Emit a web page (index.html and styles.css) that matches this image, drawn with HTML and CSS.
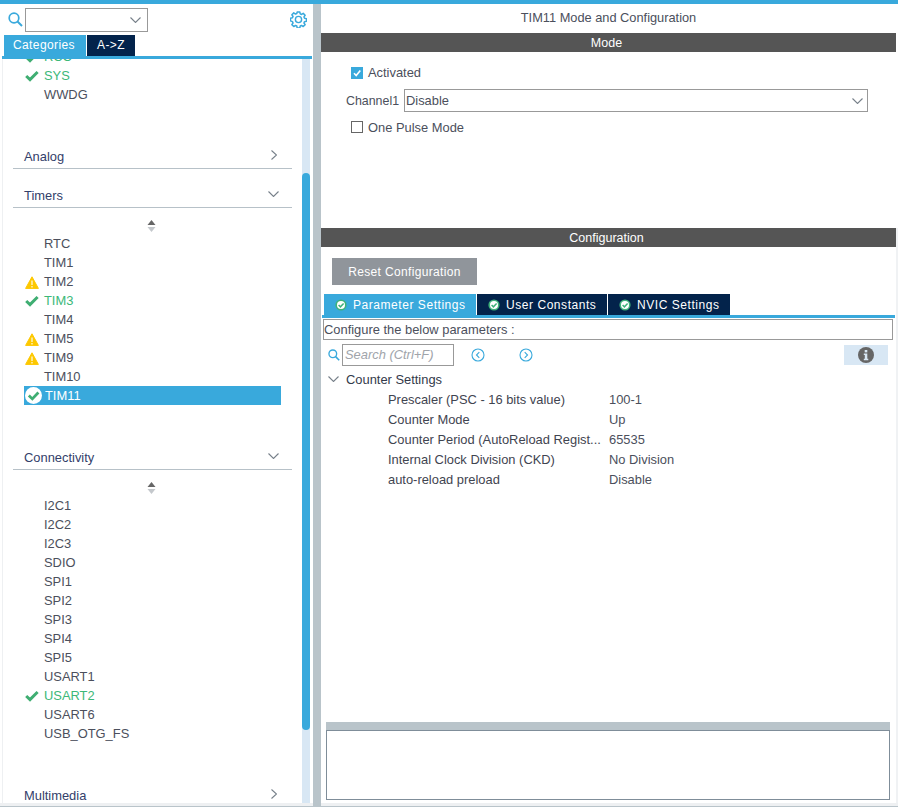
FILE: index.html
```html
<!DOCTYPE html>
<html lang="en">
<head>
<meta charset="utf-8">
<title>TIM11 Mode and Configuration</title>
<link rel="stylesheet" href="styles.css">
</head>
<body>
<svg class="defs" width="0" height="0" aria-hidden="true">
  <symbol id="i-check" viewBox="0 0 14 12"><path d="M1.2 6 5 9.6 12.6 2" fill="none" stroke="#3fae72" stroke-width="3"/></symbol>
  <symbol id="i-warn" viewBox="0 0 14 13"><path d="M7 .8 13.4 12.4H.6Z" fill="#fdc800" stroke="#fdc800" stroke-linejoin="round"/><path d="M7 4.5v4.5M7 10v1.4" stroke="#fff" stroke-width="1.1"/></symbol>
  <symbol id="i-ok" viewBox="0 0 16 16"><circle cx="8" cy="8" r="8" fill="#fff"/><path d="M3.6 8 6.9 11.2 12.6 5.2" fill="none" stroke="#3fae72" stroke-width="2.6"/></symbol>
  <symbol id="i-tab" viewBox="0 0 12 12"><circle cx="6" cy="6" r="5.6" fill="#3fb27a"/><circle cx="6" cy="6" r="4" fill="#fff"/><path d="M3.6 6 5.4 7.8 8.6 4.4" fill="none" stroke="#3fb27a" stroke-width="1.5"/></symbol>
  <symbol id="i-search" viewBox="0 0 15 15"><circle cx="6" cy="6" r="4.8" fill="none" stroke="#39a9dc" stroke-width="1.7"/><path d="M9.5 9.5 14 14" stroke="#39a9dc" stroke-width="2"/></symbol>
  <symbol id="i-down" viewBox="0 0 11 6"><path d="M.5.5 5.5 5.5 10.5.5" fill="none" stroke="#77808a" stroke-width="1.1"/></symbol>
  <symbol id="i-right" viewBox="0 0 6 10"><path d="M.5.5 5.5 5 .5 9.5" fill="none" stroke="#77808a" stroke-width="1.1"/></symbol>
  <symbol id="i-sort" viewBox="0 0 9 12"><path d="M4.5 0 8.5 5H.5Z" fill="#666"/><path d="M4.5 12 8.5 7H.5Z" fill="#c4c8cc"/></symbol>
</svg>

<div class="app">
  <aside class="left">
    <div class="search-row">
      <svg class="ic-search"><use href="#i-search"/></svg>
      <div class="combo"><svg class="ic-down"><use href="#i-down"/></svg></div>
      <svg class="ic-gear" viewBox="0 0 18 18">
        <path d="M7.6 1h2.8l.4 2.1 1.4.6 1.8-1.2 2 2-1.2 1.8.6 1.4 2.1.4v2.8l-2.1.4-.6 1.4 1.2 1.8-2 2-1.8-1.2-1.4.6-.4 2.1H7.6l-.4-2.1-1.4-.6-1.8 1.2-2-2 1.2-1.8-.6-1.4L.5 10.4V7.6l2.1-.4.6-1.4L2 4l2-2 1.8 1.2 1.4-.6z" fill="none" stroke="#39a9dc" stroke-width="1.6" stroke-linejoin="round"/>
        <circle cx="9" cy="9" r="3.3" fill="none" stroke="#39a9dc" stroke-width="1.5"/>
      </svg>
    </div>
    <div class="cat-tabs">
      <div class="cat-tab active">Categories</div>
      <div class="cat-tab">A-&gt;Z</div>
    </div>
    <div class="left-body">
      <div class="tree">
        <div class="tree-inner">
          <ul class="items first">
            <li class="item ok"><svg class="ic-check"><use href="#i-check"/></svg>RCC</li>
            <li class="item ok"><svg class="ic-check"><use href="#i-check"/></svg>SYS</li>
            <li class="item">WWDG</li>
          </ul>
          <div class="head gap"><span>Analog</span><svg class="ic-right"><use href="#i-right"/></svg></div>
          <div class="head mid"><span>Timers</span><svg class="ic-down"><use href="#i-down"/></svg></div>
          <div class="sort"><svg class="ic-sort"><use href="#i-sort"/></svg></div>
          <ul class="items">
            <li class="item">RTC</li>
            <li class="item">TIM1</li>
            <li class="item"><svg class="ic-warn"><use href="#i-warn"/></svg>TIM2</li>
            <li class="item ok"><svg class="ic-check"><use href="#i-check"/></svg>TIM3</li>
            <li class="item">TIM4</li>
            <li class="item"><svg class="ic-warn"><use href="#i-warn"/></svg>TIM5</li>
            <li class="item"><svg class="ic-warn"><use href="#i-warn"/></svg>TIM9</li>
            <li class="item">TIM10</li>
            <li class="item selected"><svg class="ic-ok"><use href="#i-ok"/></svg>TIM11</li>
          </ul>
          <div class="head gap"><span>Connectivity</span><svg class="ic-down"><use href="#i-down"/></svg></div>
          <div class="sort"><svg class="ic-sort"><use href="#i-sort"/></svg></div>
          <ul class="items">
            <li class="item">I2C1</li>
            <li class="item">I2C2</li>
            <li class="item">I2C3</li>
            <li class="item">SDIO</li>
            <li class="item">SPI1</li>
            <li class="item">SPI2</li>
            <li class="item">SPI3</li>
            <li class="item">SPI4</li>
            <li class="item">SPI5</li>
            <li class="item">USART1</li>
            <li class="item ok"><svg class="ic-check"><use href="#i-check"/></svg>USART2</li>
            <li class="item">USART6</li>
            <li class="item">USB_OTG_FS</li>
          </ul>
          <div class="head gap"><span>Multimedia</span><svg class="ic-right"><use href="#i-right"/></svg></div>
        </div>
      </div>
      <div class="scrollbar"><div class="thumb"></div></div>
    </div>
  </aside>

  <main class="right">
    <section class="mode">
      <div class="title">TIM11 Mode and Configuration</div>
      <div class="bar">Mode</div>
      <div class="mode-body">
        <label class="check-row"><span class="box checked"><svg viewBox="0 0 12 12" width="12" height="12"><path d="M3 6.2 5.2 8.6 9.3 3.4" fill="none" stroke="#fff" stroke-width="1.6"/></svg></span><span class="check-text">Activated</span></label>
        <div class="channel"><span class="channel-label">Channel1</span><div class="select">Disable<svg class="ic-down"><use href="#i-down"/></svg></div></div>
        <label class="check-row pulse"><span class="box"></span>One Pulse Mode</label>
      </div>
    </section>
    <section class="config">
      <div class="bar">Configuration</div>
      <button class="reset">Reset Configuration</button>
      <div class="tabs">
        <div class="tab active"><svg class="ic-tab"><use href="#i-tab"/></svg>Parameter Settings</div>
        <div class="tab uc"><svg class="ic-tab"><use href="#i-tab"/></svg>User Constants</div>
        <div class="tab nv"><svg class="ic-tab"><use href="#i-tab"/></svg>NVIC Settings</div>
      </div>
      <div class="hint">Configure the below parameters :</div>
      <div class="tools">
        <svg class="ic-search small"><use href="#i-search"/></svg>
        <div class="search-box">Search (Ctrl+F)</div>
        <svg class="nav first-nav" viewBox="0 0 14 14"><circle cx="7" cy="7" r="6" fill="none" stroke="#39a9dc" stroke-width="1.1"/><path d="M8.3 4.2 5.5 7l2.8 2.8" fill="none" stroke="#39a9dc" stroke-width="1.1"/></svg>
        <svg class="nav" viewBox="0 0 14 14"><circle cx="7" cy="7" r="6" fill="none" stroke="#39a9dc" stroke-width="1.1"/><path d="M5.7 4.2 8.5 7l-2.8 2.8" fill="none" stroke="#39a9dc" stroke-width="1.1"/></svg>
        <div class="info"><svg viewBox="0 0 16 16" width="16" height="16"><circle cx="8" cy="8" r="8" fill="#666"/><rect x="6.7" y="3" width="2.6" height="2.4" fill="#d8e7f4"/><path d="M5.8 6.6h3.5v5.2h1v1.4H5.8v-1.4h1v-3.8h-1z" fill="#d8e7f4"/></svg></div>
      </div>
      <div class="group"><svg class="ic-down"><use href="#i-down"/></svg>Counter Settings</div>
      <dl class="params">
        <div class="param"><dt>Prescaler (PSC - 16 bits value)</dt><dd>100-1</dd></div>
        <div class="param"><dt>Counter Mode</dt><dd>Up</dd></div>
        <div class="param"><dt>Counter Period (AutoReload Regist...</dt><dd>65535</dd></div>
        <div class="param"><dt>Internal Clock Division (CKD)</dt><dd>No Division</dd></div>
        <div class="param"><dt>auto-reload preload</dt><dd>Disable</dd></div>
      </dl>
      <div class="spacer"></div>
      <div class="desc-head"></div>
      <div class="desc"></div>
    </section>
  </main>
</div>
</body>
</html>
```
FILE: styles.css
```css
* { box-sizing: border-box; }
html, body { margin: 0; height: 100%; }
body {
  background: #b9c4ca;
  font-family: "Liberation Sans", Arial, sans-serif;
  font-size: 12.9px;
  color: #4b4f5c;
  overflow: hidden;
}
.defs { position: absolute; }
svg { display: block; flex: none; }
ul, dl, dd { margin: 0; padding: 0; list-style: none; }

.app {
  display: flex;
  height: 807px;
  border-top: 4px solid #39a9dc;
}

/* left panel */
.left {
  width: 313px;
  height: 802px;
  background: #fff;
  border-bottom: 3px solid #eef0f2;
  display: flex;
  flex-direction: column;
}
.search-row {
  height: 31px;
  display: flex;
  align-items: center;
  padding: 2px 0 2px 8px;
}
.ic-search { width: 15px; height: 15px; }
.combo {
  width: 123px;
  height: 24px;
  margin-left: 2px;
  border: 1px solid #999;
  display: flex;
  align-items: center;
  justify-content: flex-end;
  padding-right: 6px;
}
.ic-down { width: 11px; height: 6px; }
.ic-right { width: 6px; height: 10px; }
.ic-gear { width: 17px; height: 17px; margin-left: 142px; }
.cat-tabs { display: flex; gap: 1px; padding-left: 4px; height: 21px; }
.cat-tab {
  background: #03234b;
  color: #fff;
  width: 48px;
  text-align: center;
  line-height: 21px;
  font-size: 12px;
  letter-spacing: .4px;
}
.cat-tab.active { background: #39a9dc; width: 82px; padding-right: 2px; }
.left-body {
  flex: 1;
  min-height: 0;
  display: flex;
  border-top: 3px solid #39a9dc;
  margin-left: 2px;
  margin-right: 1px;
}
.tree {
  flex: 1;
  min-width: 0;
  overflow: hidden;
  border-left: 1px solid #eef0f2;
  padding-left: 10px;
}
.tree-inner { margin-top: -12px; width: 279px; }
.items { display: block; }
.item {
  height: 19px;
  line-height: 19px;
  padding-left: 31px;
  position: relative;
  color: #4b4f5c;
  display: flex;
  align-items: center;
}
.item.ok { color: #3cb878; }
.item svg { position: absolute; }
.ic-check { left: 12px; top: 4px; width: 14px; height: 12px; }
.ic-warn { left: 12px; top: 4px; width: 14px; height: 13px; }
.ic-ok { left: 12px; top: 1px; width: 17px; height: 17px; }
.selected {
  background: #39a9dc;
  color: #fff;
  margin-left: 11px;
  width: 257px;
  padding-left: 21px;
}
.selected .ic-ok { left: 1px; }
.head {
  height: 24px;
  display: flex;
  align-items: center;
  justify-content: space-between;
  border-bottom: 1px solid #b7c1c8;
  padding: 0 15px 0 11px;
  color: #33406a;
}
.head svg { margin-top: -3px; }
.head .ic-down { margin-right: -2px; margin-top: -4px; }
.gap { margin-top: 41px; }
.mid { margin-top: 15px; }
.sort { height: 26px; display: flex; justify-content: center; align-items: center; padding: 10px 3px 0 0; }
.ic-sort { width: 9px; height: 12px; }
.scrollbar { width: 8px; background: #d8e7f4; margin-right: 2px; padding-top: 114px; }
.thumb { height: 557px; background: #39a9dc; border-radius: 4px; }

/* right panel */
.right {
  margin-left: 8px;
  width: 577px;
  height: 802px;
  display: flex;
  flex-direction: column;
  background: #fff;
  border-bottom: 3px solid #eef0f2;
}
.mode { height: 216px; background: #fff; }
.mode .title, .mode .bar { margin-right: 2px; }
.title { height: 29px; line-height: 28px; text-align: center; color: #4b4f5c; font-size: 12.8px; }
.bar { height: 19px; line-height: 20px; background: #555; color: #fff; text-align: center; padding-right: 4px; font-size: 12.5px; }
.mode-body { padding-top: 14px; }
.check-row { display: flex; align-items: center; height: 14px; padding-left: 30px; gap: 5px; }
.check-text { margin-top: -2px; }
.box { width: 12px; height: 12px; border: 1px solid #666; flex: none; }
.box.checked { background: #39a9dc; border: 0; }
.channel { display: flex; align-items: center; margin: 9px 0 8px; padding-left: 25px; }
.channel-label { width: 58px; font-size: 12.4px; }
.select {
  width: 464px;
  height: 23px;
  border: 1px solid #999;
  padding: 0 4px 0 1px;
  display: flex;
  align-items: center;
  justify-content: space-between;
}
.pulse { height: 14px; }

.config {
  margin-top: 8px;
  flex: 1;
  min-height: 0;
  display: flex;
  flex-direction: column;
  background: #fff;
  border-right: 2px solid #f0f2f4;
}
.reset {
  display: block;
  align-self: flex-start;
  margin: 11px 0 9px 11px;
  width: 145px;
  height: 27px;
  border: 0;
  background: #90959b;
  color: #fff;
  font: 12px "Liberation Sans", Arial, sans-serif;
  letter-spacing: .35px;
}
.tabs {
  display: flex;
  gap: 1px;
  height: 24px;
  padding: 0 0 0 2px;
  margin-left: 1px;
  margin-right: 1px;
  border-bottom: 3px solid #39a9dc;
}
.tab {
  width: 130px;
  background: #03234b;
  color: #fff;
  display: flex;
  align-items: center;
  padding-left: 11px;
  gap: 6px;
  font-size: 12px;
  letter-spacing: .55px;
}
.tab.active { background: #39a9dc; width: 152px; }
.tab.nv { width: 122px; }
.ic-tab { width: 12px; height: 12px; }
.hint {
  margin: 1px 3px 0 2px;
  height: 21px;
  line-height: 20px;
  border: 1px solid #999;
}
.tools { display: flex; align-items: center; height: 22px; margin-top: 4px; padding-left: 7px; }
.small { width: 12px; height: 12px; }
.search-box {
  width: 112px;
  height: 22px;
  margin-left: 2px;
  border: 1px solid #999;
  font-style: italic;
  color: #a0a4aa;
  line-height: 20px;
  padding-left: 2px;
}
.nav { width: 14px; height: 14px; margin-left: 34px; }
.first-nav { margin-left: 17px; }
.info {
  margin-left: auto;
  margin-right: 8px;
  width: 44px;
  height: 20px;
  background: #d8e7f4;
  display: flex;
  align-items: center;
  justify-content: center;
}
.group { display: flex; align-items: center; height: 18px; margin-top: 4px; padding-left: 7px; gap: 7px; color: #333a4a; }
.params { margin-top: 2px; }
.param { display: flex; height: 20px; line-height: 20px; padding-left: 67px; }
.param dt { width: 221px; color: #3f4450; }
.spacer { flex: 1; }
.desc-head { height: 8px; background: #b9c4ca; margin: 0 6px 0 5px; }
.desc { height: 70px; border: 1px solid #7f8d99; margin: 0 6px 3px 5px; }
```
